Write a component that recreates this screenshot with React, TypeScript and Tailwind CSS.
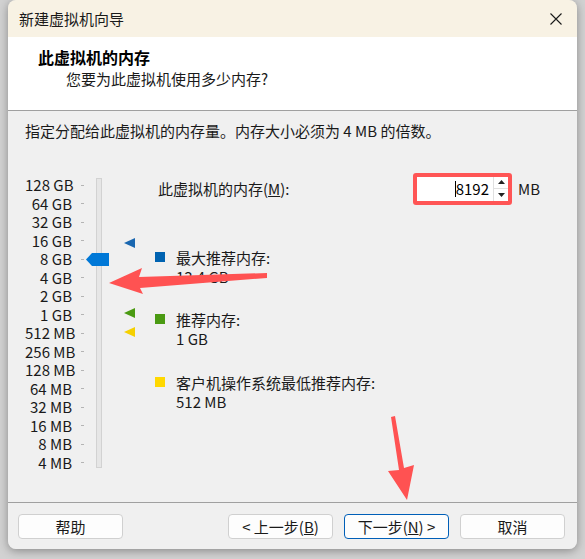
import React from "react";

const font = { fontFamily: '"Noto Sans CJK SC", "Noto Sans", sans-serif' };

const sizes = [
  "128 GB",
  "64 GB",
  "32 GB",
  "16 GB",
  "8 GB",
  "4 GB",
  "2 GB",
  "1 GB",
  "512 MB",
  "256 MB",
  "128 MB",
  "64 MB",
  "32 MB",
  "16 MB",
  "8 MB",
  "4 MB",
];

const Marker = ({ color, top }: { color: string; top: string }) => (
  <svg className={`absolute left-[99px] ${top}`} width="11" height="10" viewBox="0 0 11 10">
    <polygon points="0,5 11,0 11,10" fill={color} />
  </svg>
);

const Legend = ({
  color,
  title,
  value,
  className,
}: {
  color: string;
  title: string;
  value: string;
  className: string;
}) => (
  <div className={`flex items-start ${className}`}>
    <div className={`w-[10px] h-[10px] mt-[4px] ${color}`} />
    <div className="ml-[11px] leading-[19px]">
      <div>{title}</div>
      <div>{value}</div>
    </div>
  </div>
);

const Button = ({
  children,
  primary,
}: {
  children: React.ReactNode;
  primary?: boolean;
}) => (
  <button
    className={`w-[105px] h-[25px] rounded-[4px] bg-[#fdfdfd] text-[15px] leading-none text-[#1a1a1a] border ${
      primary ? "border-[#005fb8]" : "border-[#d0d0d0]"
    }`}
  >
    {children}
  </button>
);

const App = () => {
  return (
    <div
      className="relative w-[585px] h-[559px] overflow-hidden bg-[#d2d2d2] text-[15px] text-[#1a1a1a]"
      style={font}
    >
      <div className="ml-[8px] w-[569px] h-[549px] rounded-[8px] overflow-hidden flex flex-col shadow-[0_2px_10px_rgba(0,0,0,0.35)]">
        {/* title bar */}
        <div className="h-[37px] bg-[#f8f2e4] flex items-center justify-between pl-[11px] pr-[15px]">
          <span className="leading-[20px]">新建虚拟机向导</span>
          <svg width="12" height="12" viewBox="0 0 12 12">
            <path d="M0.5 0.5 L11.5 11.5 M11.5 0.5 L0.5 11.5" stroke="#1a1a1a" strokeWidth="1.1" />
          </svg>
        </div>

        {/* header */}
        <div className="h-[74px] bg-white border-b border-[#a0a0a0] pt-[9px] pl-[30px]">
          <div className="text-[16px] font-bold leading-[22px] text-black">此虚拟机的内存</div>
          <div className="mt-[1px] pl-[28px] leading-[20px]">您要为此虚拟机使用多少内存?</div>
        </div>

        {/* body */}
        <div className="h-[391px] bg-[#f0f0f0] pt-[10px] pl-[17px]">
          <div className="leading-[20px]">指定分配给此虚拟机的内存量。内存大小必须为 4 MB 的倍数。</div>

          <div className="mt-[29px] flex">
            {/* slider */}
            <div className="relative w-[110px] pt-[6px] flex">
              <div className="flex flex-col">
                {sizes.map((s) => (
                  <div key={s} className="h-[18.5px] flex items-center">
                    <span className="w-[47px] text-right leading-[16px] whitespace-nowrap">{s}</span>
                    <span className="ml-[9px] w-[3px] h-px bg-[#b4b4b4]" />
                  </div>
                ))}
              </div>
              <div className="ml-[12px] mt-[2px] w-[6px] h-[290px] bg-[#e6e6e6] border border-[#d2d2d2]" />

              <svg className="absolute left-[61px] top-[83px]" width="23" height="13" viewBox="0 0 23 13">
                <polygon points="0,6.5 6,0 23,0 23,13 6,13" fill="#0078d7" />
              </svg>
              <Marker color="#1a67b0" top="top-[68px]" />
              <Marker color="#4a9a12" top="top-[138px]" />
              <Marker color="#f5d000" top="top-[157px]" />
            </div>

            {/* right column */}
            <div className="ml-[20px] flex flex-col">
              <div className="mt-[2px] h-[33px] flex items-center">
                <span className="pl-[3px] w-[258px] leading-[20px]">
                  此虚拟机的内存(<span className="underline">M</span>):
                </span>
                <div className="flex border-[4px] border-[#ff5555] rounded-[3px]">
                  <div className="w-[76px] h-[24px] bg-white flex items-center justify-end pr-[4px]">
                    <span className="w-px h-[16px] bg-black" />
                    <span className="leading-[20px] text-black">8192</span>
                  </div>
                  <div className="w-[15px] h-[24px] bg-white flex flex-col border-l border-[#e0e0e0]">
                    <div className="h-[12px] flex items-center justify-center border-b border-[#e0e0e0]">
                      <svg width="7" height="4" viewBox="0 0 7 4">
                        <polygon points="0,4 3.5,0 7,4" fill="#222" />
                      </svg>
                    </div>
                    <div className="flex-1 flex items-center justify-center">
                      <svg width="7" height="4" viewBox="0 0 7 4">
                        <polygon points="0,0 3.5,4 7,0" fill="#222" />
                      </svg>
                    </div>
                  </div>
                </div>
                <span className="ml-[6px] leading-[20px]">MB</span>
              </div>

              <Legend color="bg-[#0063b1]" title="最大推荐内存:" value="13.4 GB" className="mt-[43px]" />
              <Legend color="bg-[#4a9a12]" title="推荐内存:" value="1 GB" className="mt-[24px]" />
              <Legend
                color="bg-[#ffd800]"
                title="客户机操作系统最低推荐内存:"
                value="512 MB"
                className="mt-[25px]"
              />
            </div>
          </div>
        </div>

        {/* footer */}
        <div className="flex-1 bg-[#f0f0f0] border-t border-[#a0a0a0] pt-[11px] pl-[10px] pr-[12px] flex items-start">
          <Button>帮助</Button>
          <div className="ml-auto flex gap-[11px]">
            <Button>
              &lt; 上一步(<span className="underline">B</span>)
            </Button>
            <Button primary>
              下一步(<span className="underline">N</span>) &gt;
            </Button>
            <Button>取消</Button>
          </div>
        </div>
      </div>

      {/* annotation arrows */}
      <svg className="absolute inset-0 pointer-events-none" width="585" height="559" viewBox="0 0 585 559">
        <polygon
          points="109,283 142,268 139,277 267,273 267,278 140,288 143,294"
          fill="#ff5252"
        />
        <polygon
          points="391,417 395,416 404,468 414,465 407,500 388,471 399,470"
          fill="#ff5252"
        />
      </svg>
    </div>
  );
};

export default App;
